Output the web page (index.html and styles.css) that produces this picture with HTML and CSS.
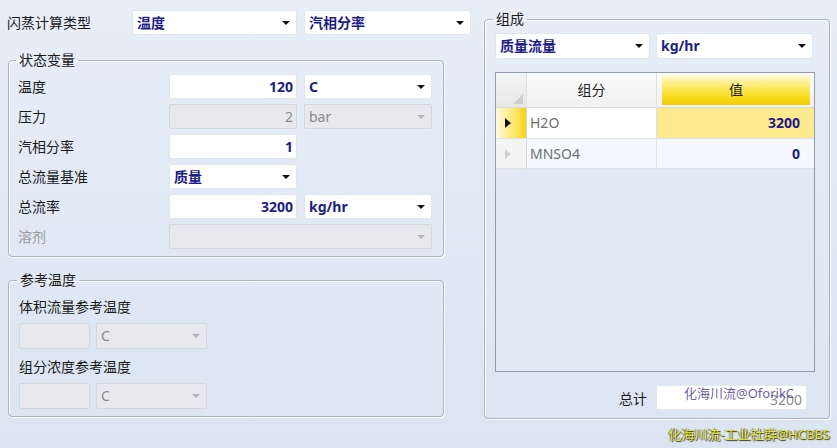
FILE: index.html
```html
<!DOCTYPE html>
<html lang="zh-CN">
<head>
    <meta charset="UTF-8">
    <title>闪蒸计算</title>
    <link rel="stylesheet" href="styles.css">
</head>
<body>
    <div class="window">
        <div class="left">
            <div class="top-row">
                <span class="top-label">闪蒸计算类型</span>
                <div class="combo type-combo">温度</div>
                <div class="combo spec-combo">汽相分率</div>
            </div>

            <fieldset class="group state-group">
                <legend>状态变量</legend>
                <div class="row">
                    <label>温度</label>
                    <div class="field">120</div>
                    <div class="combo unit">C</div>
                </div>
                <div class="row">
                    <label>压力</label>
                    <div class="field disabled">2</div>
                    <div class="combo unit disabled">bar</div>
                </div>
                <div class="row">
                    <label>汽相分率</label>
                    <div class="field">1</div>
                </div>
                <div class="row">
                    <label>总流量基准</label>
                    <div class="combo unit">质量</div>
                </div>
                <div class="row">
                    <label>总流率</label>
                    <div class="field">3200</div>
                    <div class="combo unit">kg/hr</div>
                </div>
                <div class="row">
                    <label class="muted">溶剂</label>
                    <div class="combo wide disabled"></div>
                </div>
            </fieldset>

            <fieldset class="group ref-group">
                <legend>参考温度</legend>
                <div class="ref-label">体积流量参考温度</div>
                <div class="ref-row">
                    <div class="field disabled small"></div>
                    <div class="combo disabled ref-unit">C</div>
                </div>
                <div class="ref-label second">组分浓度参考温度</div>
                <div class="ref-row">
                    <div class="field disabled small"></div>
                    <div class="combo disabled ref-unit">C</div>
                </div>
            </fieldset>
        </div>

        <div class="right">
            <fieldset class="group comp-group">
                <legend>组成</legend>
                <div class="comp-combos">
                    <div class="combo basis">质量流量</div>
                    <div class="combo basis-unit">kg/hr</div>
                </div>

                <div class="grid">
                    <div class="cell head corner"></div>
                    <div class="cell head">组分</div>
                    <div class="cell head active-head"><span>值</span></div>

                    <div class="cell row-head selected"><i class="tri"></i></div>
                    <div class="cell name">H2O</div>
                    <div class="cell value current">3200</div>

                    <div class="cell row-head"><i class="tri"></i></div>
                    <div class="cell name alt">MNSO4</div>
                    <div class="cell value alt">0</div>
                </div>

                <div class="total-row">
                    <span class="total-label">总计</span>
                    <div class="total-field">
                        3200
                        <span class="stamp">化海川流@OforikC</span>
                    </div>
                </div>
            </fieldset>
        </div>
    </div>

    <div class="footer">化海川流-工业社群@HCBBS</div>
</body>
</html>
```

FILE: styles.css
```css
* {
    box-sizing: border-box;
}

body {
    margin: 0;
    width: 837px;
    height: 448px;
    overflow: hidden;
    font-family: 'Noto Sans', 'Noto Sans CJK SC', sans-serif;
    font-size: 14px;
    color: #1b1b1b;
    background: linear-gradient(180deg, #e7eef8 0%, #dfe8f4 60%, #dbe5f2 100%);
}

.window {
    display: flex;
    align-items: flex-start;
}

.left {
    width: 476px;
    padding-top: 10px;
}

/* top selector row */
.top-row {
    display: flex;
    align-items: center;
    height: 25px;
    margin-left: 7px;
}

.top-label {
    width: 125px;
    line-height: 25px;
}

.type-combo {
    width: 165px;
}

.spec-combo {
    width: 167px;
    margin-left: 7px;
}

/* group boxes */
.group {
    margin: 0;
    border: 1px solid #a9b6c5;
    border-radius: 4px;
    box-shadow: inset 1px 1px 0 #fbfdff, 1px 1px 0 #fbfdff;
    min-width: 0;
}

.group legend {
    padding: 0 3px;
    margin-left: -2px;
    line-height: 16px;
    font-size: 14px;
}

.state-group {
    width: 436px;
    margin-left: 8px;
    margin-top: 17px;
    padding: 6px 10px 7px 9px;
}

.row {
    display: flex;
    align-items: center;
    height: 25px;
    margin-bottom: 5px;
}

.row:last-child {
    margin-bottom: 0;
}

.row label {
    width: 151px;
    line-height: 25px;
}

.row label.muted {
    color: #9a9a9a;
}

/* inputs */
.field {
    width: 128px;
    height: 25px;
    line-height: 23px;
    padding-right: 3px;
    text-align: right;
    font-weight: bold;
    color: #1c1c8e;
    background: #fff;
    border: 1px solid #e1e6ed;
    border-radius: 2px;
}

.field.disabled {
    background: #e9e9ed;
    border-color: #d3d7de;
    color: #8a8a8a;
    font-weight: normal;
}

.field.small {
    width: 71px;
    height: 26px;
}

.combo {
    position: relative;
    height: 25px;
    line-height: 23px;
    padding-left: 4px;
    font-weight: bold;
    color: #1c1c8e;
    background: #fff;
    border: 1px solid #e1e6ed;
    border-radius: 2px;
}

.combo::after {
    content: '';
    position: absolute;
    right: 6px;
    top: 10px;
    border-left: 4px solid transparent;
    border-right: 4px solid transparent;
    border-top: 4px solid #111;
}

.combo.disabled {
    background: #e9e9ed;
    border-color: #d3d7de;
    color: #8a8a8a;
    font-weight: normal;
}

.combo.disabled::after {
    border-top-color: #b2b4b9;
}

.combo.unit {
    width: 128px;
}

.row .field + .combo {
    margin-left: 7px;
}

.combo.wide {
    width: 263px;
}

/* reference temperature group */
.ref-group {
    width: 436px;
    margin-left: 8px;
    margin-top: 15px;
    padding: 9px 10px 7px 10px;
}

.ref-label {
    line-height: 20px;
}

.ref-label.second {
    margin-top: 8px;
}

.ref-row {
    display: flex;
    margin-top: 6px;
}

.ref-unit {
    width: 111px;
    height: 26px;
    line-height: 24px;
    margin-left: 6px;
}

/* composition */
.right {
    padding-top: 11px;
}

.comp-group {
    width: 346px;
    margin-left: 8px;
    height: 408px;
    padding: 6px 13px 7px 10px;
}

.comp-combos {
    display: flex;
    gap: 6px;
}

.basis {
    width: 155px;
    height: 26px;
    line-height: 24px;
}

.basis-unit {
    width: 157px;
    height: 26px;
    line-height: 24px;
}

.grid {
    display: grid;
    grid-template-columns: 31px 130px 1fr;
    grid-template-rows: 35px 31px 30px;
    align-content: start;
    width: 320px;
    height: 300px;
    margin-top: 13px;
    border: 1px solid #8f9cab;
    background: #e1e9f4;
}

.cell {
    border-right: 1px solid #dde2e8;
    border-bottom: 1px solid #dde2e8;
}

.head {
    background: linear-gradient(180deg, #fbfbfb 0%, #f1f1f1 100%);
    text-align: center;
    line-height: 34px;
    color: #222;
    border-bottom-color: #d6d9dd;
}

.corner {
    position: relative;
    background: linear-gradient(180deg, #f4f4f4 0%, #e8e8e8 100%);
}

.corner::after {
    content: '';
    position: absolute;
    right: 3px;
    bottom: 3px;
    border-left: 10px solid transparent;
    border-bottom: 10px solid #cfcfcf;
}

.active-head {
    padding: 2px 4px 2px 5px;
    border-right: none;
}

.active-head span {
    display: block;
    height: 100%;
    line-height: 30px;
    background: linear-gradient(180deg, #fffadb 0%, #fdef80 30%, #f9df22 70%, #f2cc00 100%);
}

.row-head {
    position: relative;
    background: #f4f4f4;
    border-right-color: #d6d9dd;
}

.row-head.selected {
    background: linear-gradient(90deg, #fffbe0 0%, #fbe45a 70%, #f6d40c 100%);
}

.tri {
    position: absolute;
    left: 9px;
    top: 10px;
    border-top: 5px solid transparent;
    border-bottom: 5px solid transparent;
    border-left: 6px solid #d2d2d2;
}

.row-head.selected .tri {
    border-left-color: #111;
}

.name {
    padding-left: 3px;
    line-height: 29px;
    color: #707070;
    background: #fff;
}

.name.alt,
.value.alt {
    background: #f5f8fc;
}

.value {
    text-align: right;
    padding-right: 14px;
    line-height: 29px;
    font-weight: bold;
    color: #1c1c8e;
    border-right: none;
}

.value.current {
    background: #fde98e;
}

.total-row {
    display: flex;
    justify-content: flex-end;
    align-items: center;
    margin-top: 13px;
    margin-right: 9px;
}

.total-label {
    margin-right: 9px;
}

.total-field {
    position: relative;
    width: 151px;
    height: 25px;
    padding-top: 4px;
    padding-right: 4px;
    text-align: right;
    line-height: 20px;
    color: #8c8c8c;
    background: #fff;
    border: 1px solid #e4e8ee;
}

.stamp {
    position: absolute;
    left: 27px;
    top: -3px;
    font-size: 13px;
    color: rgba(80, 64, 150, 0.85);
}

.footer {
    margin-top: 6px;
    padding-right: 7px;
    text-align: right;
    line-height: 18px;
    font-size: 13px;
    color: #e4e41c;
    text-shadow: 1px 1px 1px rgba(0, 0, 0, 0.75), -1px 0 1px rgba(0, 0, 0, 0.45);
}
```
